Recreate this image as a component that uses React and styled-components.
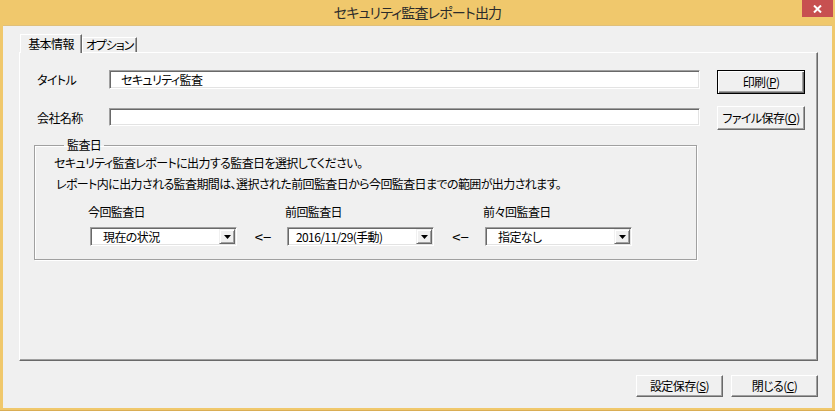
import React from 'react';
import styled, { createGlobalStyle } from 'styled-components';

const Global = createGlobalStyle`
  html, body { margin: 0; padding: 0; background: #F0C86C; }
  body {
    font-family: "Noto Sans CJK JP", "Noto Sans", sans-serif;
    font-size: 12px;
    color: #000;
    font-feature-settings: "palt";
    letter-spacing: -0.6px;
  }
  * { box-sizing: border-box; }
`;

const Window = styled.div`
  width: 835px;
  height: 411px;
  display: flex;
  flex-direction: column;
  background: #F0C86C;
  border-bottom: 1px solid #D9AD55;
`;

const TitleBar = styled.div`
  height: 25px;
  flex: none;
  display: grid;
  grid-template-columns: 1fr auto 1fr;
`;

const Title = styled.div`
  grid-column: 2;
  font-size: 14px;
  line-height: 25px;
  color: #2b2b2b;
  letter-spacing: -0.8px;
`;

const CloseButton = styled.div`
  grid-column: 3;
  justify-self: end;
  align-self: start;
  width: 31px;
  height: 17px;
  margin-right: 2px;
  background: #C75050;
  display: flex;
  align-items: center;
  justify-content: center;
`;

const Client = styled.div`
  flex: 1;
  margin: 0 3px 2px;
  background: #F0F0F0;
  border-top: 1px solid #E0C07a;
  padding: 8px 14px 11px 16px;
  display: flex;
  flex-direction: column;
`;

const TabStrip = styled.div`
  height: 18px;
  display: flex;
  align-items: flex-end;
  padding-left: 1px;
  position: relative;
  z-index: 2;
`;

const Tab = styled.div`
  width: ${p => (p.$active ? 62 : 55)}px;
  height: ${p => (p.$active ? 19 : 15)}px;
  margin-bottom: ${p => (p.$active ? -1 : 0)}px;
  background: #F0F0F0;
  border-top: 1px solid #fff;
  border-left: 1px solid #fff;
  border-right: 1px solid #696969;
  box-shadow: inset -1px 0 0 #A0A0A0;
  display: flex;
  align-items: center;
  justify-content: center;
  font-size: 12px;
  line-height: 14px;
  letter-spacing: ${p => (p.$active ? -0.6 : -1.1)}px;
  white-space: nowrap;
  padding-bottom: ${p => (p.$active ? 1 : 0)}px;
`;

const Panel = styled.div`
  flex: 1;
  border-top: 1px solid #fff;
  border-left: 1px solid #fff;
  border-right: 1px solid #696969;
  border-bottom: 1px solid #696969;
  box-shadow: inset -1px -1px 0 #A0A0A0;
  padding: 17px 12px 0 14px;
  display: flex;
  gap: 17px;
`;

const LeftCol = styled.div`
  width: 666px;
  display: flex;
  flex-direction: column;
`;

const RightCol = styled.div`
  width: 88px;
  display: flex;
  flex-direction: column;
  gap: 12px;
`;

const FieldRow = styled.div`
  display: grid;
  grid-template-columns: 75px 1fr;
  align-items: center;
  height: ${p => p.$h}px;
  margin-bottom: ${p => p.$mb || 0}px;
`;

const Label = styled.div`
  padding-left: 3px;
  font-size: 12px;
`;

const TextBox = styled.div`
  height: 100%;
  background: #fff;
  border-top: 1px solid #A0A0A0;
  border-left: 1px solid #A0A0A0;
  border-right: 1px solid #fff;
  border-bottom: 1px solid #fff;
  box-shadow: inset 1px 1px 0 #696969, inset -1px -1px 0 #E3E3E3;
  padding-left: 11px;
  display: flex;
  align-items: center;
  font-size: 12px;
`;

const Button = styled.div`
  width: ${p => p.$w}px;
  height: ${p => p.$h}px;
  background: #F0F0F0;
  border: 1px solid;
  border-color: ${p => (p.$default ? '#000' : '#fff #696969 #696969 #fff')};
  box-shadow: ${p =>
    p.$default
      ? 'inset 1px 1px 0 #fff, inset -1px -1px 0 #696969, inset -2px -2px 0 #A0A0A0'
      : 'inset -1px -1px 0 #A0A0A0'};
  display: flex;
  align-items: center;
  justify-content: center;
  font-size: 12px;
  line-height: 14px;
  white-space: nowrap;
  u { text-decoration-thickness: 1px; text-underline-offset: 1px; }
`;

const Group = styled.fieldset`
  margin: 12px 0 0;
  width: 663px;
  min-width: 0;
  border: 1px solid #A0A0A0;
  box-shadow: inset 1px 1px 0 #fff, 1px 1px 0 #fff;
  padding: 0 19px 13px 19px;
`;

const Legend = styled.legend`
  margin-left: 10px;
  padding: 0 3px;
  line-height: 14px;
  font-size: 12px;
`;

const Line = styled.div`
  line-height: 21px;
  font-size: 12px;
  padding-left: ${p => p.$indent || 0}px;
  white-space: nowrap;
`;

const Selectors = styled.div`
  margin: 10px 0 0 36px;
  display: grid;
  grid-template-columns: 147px 50px 147px 51px 147px;
  grid-template-rows: 16px 19px;
  row-gap: 7px;
`;

const SelLabel = styled.div`
  grid-row: 1;
  grid-column: ${p => p.$col};
  margin-left: -2px;
  line-height: 16px;
  font-size: 12px;
`;

const Arrow = styled.div`
  grid-row: 2;
  grid-column: ${p => p.$col};
  display: flex;
  align-items: center;
  justify-content: center;
  font-size: 15px;
  letter-spacing: 0;
  padding-left: 2px;
`;

const Combo = styled.div`
  grid-row: 2;
  grid-column: ${p => p.$col};
  background: #fff;
  border-top: 1px solid #A0A0A0;
  border-left: 1px solid #A0A0A0;
  border-right: 1px solid #fff;
  border-bottom: 1px solid #fff;
  box-shadow: inset 1px 1px 0 #696969, inset -1px -1px 0 #E3E3E3;
  padding: 1px;
  display: flex;
  align-items: center;
`;

const ComboText = styled.div`
  flex: 1;
  padding-left: ${p => p.$pad}px;
  font-size: 12px;
  white-space: nowrap;
`;

const DropButton = styled.div`
  width: 16px;
  height: 15px;
  background: #F0F0F0;
  border-top: 1px solid #F0F0F0;
  border-left: 1px solid #F0F0F0;
  border-right: 1px solid #696969;
  border-bottom: 1px solid #696969;
  box-shadow: inset 1px 1px 0 #fff, inset -1px -1px 0 #A0A0A0;
  display: flex;
  align-items: center;
  justify-content: center;
`;

const Footer = styled.div`
  margin-top: 14px;
  display: flex;
  justify-content: flex-end;
  gap: 8px;
`;

const Triangle = () => (
  <svg width="7" height="4" viewBox="0 0 7 4">
    <path d="M0 0H7L3.5 4Z" fill="#000" />
  </svg>
);

const Select = ({ col, text, pad }) => (
  <Combo $col={col}>
    <ComboText $pad={pad}>{text}</ComboText>
    <DropButton>
      <Triangle />
    </DropButton>
  </Combo>
);

export default function App() {
  return (
    <>
      <Global />
      <Window>
        <TitleBar>
          <Title>セキュリティ監査レポート出力</Title>
          <CloseButton>
            <svg width="9" height="8" viewBox="0 0 9 8">
              <path d="M1 0.5L8 7.5M8 0.5L1 7.5" stroke="#fff" strokeWidth="2" />
            </svg>
          </CloseButton>
        </TitleBar>
        <Client>
          <TabStrip>
            <Tab $active>基本情報</Tab>
            <Tab>オプション</Tab>
          </TabStrip>
          <Panel>
            <LeftCol>
              <FieldRow $h={19} $mb={19}>
                <Label>タイトル</Label>
                <TextBox>セキュリティ監査</TextBox>
              </FieldRow>
              <FieldRow $h={18}>
                <Label>会社名称</Label>
                <TextBox />
              </FieldRow>
              <Group>
                <Legend>監査日</Legend>
                <Line>セキュリティ監査レポートに出力する監査日を選択してください。</Line>
                <Line $indent={2}>
                  レポート内に出力される監査期間は、選択された前回監査日から今回監査日までの範囲が出力されます。
                </Line>
                <Selectors>
                  <SelLabel $col={1}>今回監査日</SelLabel>
                  <SelLabel $col={3}>前回監査日</SelLabel>
                  <SelLabel $col={5}>前々回監査日</SelLabel>
                  <Select col={1} text="現在の状況" pad={11} />
                  <Arrow $col={2}>&lt;−</Arrow>
                  <Select col={3} text="2016/11/29(手動)" pad={7} />
                  <Arrow $col={4}>&lt;−</Arrow>
                  <Select col={5} text="指定なし" pad={11} />
                </Selectors>
              </Group>
            </LeftCol>
            <RightCol>
              <Button $w={88} $h={24} $default>
                印刷(<u>P</u>)
              </Button>
              <Button $w={88} $h={24}>
                ファイル保存(<u>O</u>)
              </Button>
            </RightCol>
          </Panel>
          <Footer>
            <Button $w={87} $h={22}>
              設定保存(<u>S</u>)
            </Button>
            <Button $w={87} $h={22}>
              閉じる(<u>C</u>)
            </Button>
          </Footer>
        </Client>
      </Window>
    </>
  );
}
